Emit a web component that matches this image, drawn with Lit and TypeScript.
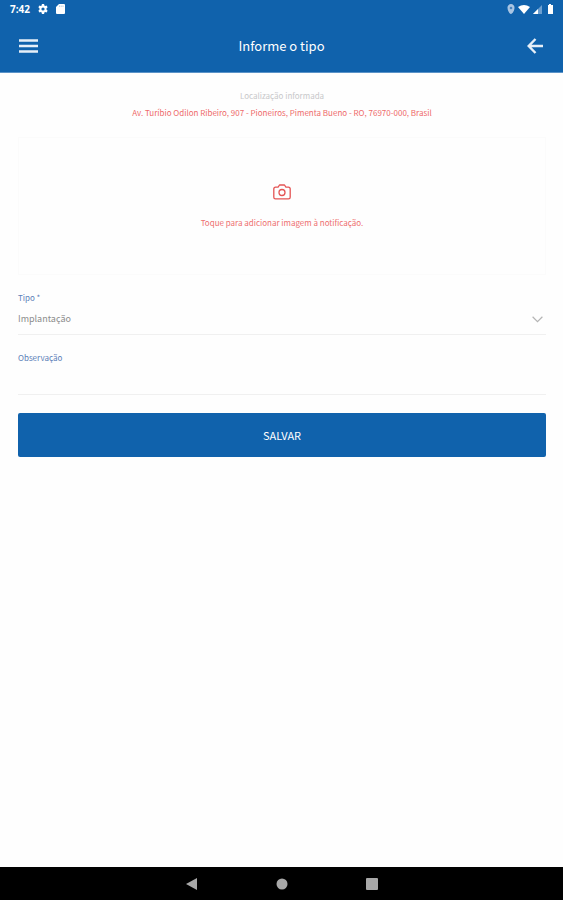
import { LitElement, html, css } from "lit";
import { customElement, state } from "lit/decorators.js";

@customElement("app-root")
export class AppRoot extends LitElement {
  @state() private note = "";

  static styles = css`
    :host {
      display: flex;
      flex-direction: column;
      min-height: 100vh;
      background: #fefefe;
      font-family: "Noto Sans CJK JP", Roboto, sans-serif;
      font-size: 8px;
      line-height: 12px;
      color: #8a8a8a;
    }
    * { box-sizing: border-box; }
    button, input, select {
      font: inherit;
      color: inherit;
      margin: 0;
      padding: 0;
      border: 0;
      border-radius: 0;
      background: none;
      outline: none;
    }
    button { cursor: pointer; }
    svg { display: block; }
    .top { background: #1062ac; color: #fff; border-bottom: 1px solid #5b93c8; }
    .status {
      display: flex;
      align-items: center;
      justify-content: space-between;
      height: 18px;
      padding: 0 9px 0 10px;
    }
    .group { display: flex; align-items: center; gap: 7px; }
    .signals { gap: 3px; }
    .time { font-family: "Open Sans", sans-serif; font-size: 10px; font-weight: 700; }
    .bar {
      display: grid;
      grid-template-columns: 24px 1fr 24px;
      align-items: center;
      height: 54px;
      padding: 2px 16px 0;
    }
    .bar button { display: grid; place-items: center; height: 24px; }
    h1 { margin: 0; text-align: center; font-size: 13px; line-height: 20px; font-weight: 400; }
    main { flex: 1; padding: 17px 17px 24px 18px; }
    .place { margin: 0; text-align: center; line-height: 12px; color: #c8c8ca; }
    .address { margin: 4px 0 0; text-align: center; line-height: 14px; color: #ee6a6a; }
    .photo {
      display: flex;
      flex-direction: column;
      align-items: center;
      justify-content: center;
      gap: 17px;
      width: 100%;
      height: 138px;
      margin: 17px 0;
      border: 1px solid #fbfbfb;
      color: #ee7070;
    }
    label { display: block; color: #5c80b8; }
    .field { border-bottom: 1px solid #f0f0f0; }
    .select { display: grid; align-items: center; margin-bottom: 17px; }
    .select select, .select svg { grid-area: 1 / 1; }
    .select svg { justify-self: end; margin-right: 3px; pointer-events: none; }
    select { appearance: none; width: 100%; height: 30px; font-size: 9px; color: #8c8c8c; }
    input { display: block; width: 100%; height: 30px; font-size: 9px; }
    .save {
      display: block;
      width: 100%;
      height: 44px;
      margin-top: 18px;
      border-radius: 2px;
      background: #1062ac;
      color: #fff;
      font-size: 11px;
    }
    .nav {
      display: flex;
      align-items: center;
      justify-content: center;
      gap: 78px;
      height: 33px;
      background: #000;
    }
    .nav button { display: block; width: 12px; height: 12px; }
  `;

  render() {
    return html`
      <header class="top">
        <div class="status">
          <div class="group">
            <span class="time">7:42</span>
            <svg width="12" height="12" viewBox="0 0 24 24" fill="#fff"><path fill-rule="evenodd" d="M9.800 2h4.400l.5 2.800 1.700 1 2.700-1 2.200 3.800-2.200 1.800v3.200l2.200 1.800-2.200 3.800-2.700-1-1.700 1-.5 2.800H9.800l-.5-2.800-1.700-1-2.700 1-2.200-3.800 2.200-1.800v-3.200L2.700 8.600l2.200-3.800 2.700 1 1.700-1zM12 8.800a3.200 3.200 0 1 0 0 6.400 3.200 3.200 0 0 0 0-6.400z"/></svg>
            <svg width="9" height="10" viewBox="0 0 9 10"><path d="M3 0h5a1 1 0 0 1 1 1v8a1 1 0 0 1-1 1H1a1 1 0 0 1-1-1V3z" fill="#fff"/><path d="M3.500 1.500v1.500M5.200 1.500v1.500M7 1.500v1.500" stroke="#8eb5da" stroke-width=".6"/></svg>
          </div>
          <div class="group signals">
            <svg width="8" height="10" viewBox="0 0 8 10"><path d="M4 0a3.500 3.500 0 0 1 3.500 3.800C7.500 6.500 5.500 10 4 10S.5 6.500.5 3.800A3.500 3.500 0 0 1 4 0z" fill="#a9c5e3"/><circle cx="4" cy="4" r="1.300" fill="#4984bf"/></svg>
            <svg width="12" height="9" viewBox="0 0 12 9"><path d="M0 2Q6-2 12 2L6 9z" fill="#fff"/></svg>
            <svg width="9" height="9" viewBox="0 0 9 9"><path d="M9 0v9H0z" fill="#6c9fd0"/><path d="M5 4v5H0z" fill="#fff"/></svg>
            <svg width="9" height="10" viewBox="0 0 9 10"><path d="M3 1h1V0h2v1h2v9H3V1z" fill="#fff"/></svg>
          </div>
        </div>
        <div class="bar">
          <button aria-label="Menu">
            <svg width="20" height="16" viewBox="0 0 20 16"><path d="M1 2.500h19M1 8h19M1 13.500h19" stroke="#e6eff8" stroke-width="2.600"/></svg>
          </button>
          <h1>Informe o tipo</h1>
          <button aria-label="Voltar">
            <svg width="16" height="16" viewBox="0 0 16 16" fill="none" stroke="#e6eff8" stroke-width="2.400"><path d="M8.500 1 1.700 8l6.800 7M2 8h14"/></svg>
          </button>
        </div>
      </header>
      <main>
        <p class="place">Localização informada</p>
        <p class="address">Av. Turíbio Odilon Ribeiro, 907 - Pioneiros, Pimenta Bueno - RO, 76970-000, Brasil</p>
        <button class="photo">
          <svg width="18" height="16" viewBox="0 0 18 16" fill="none" stroke="#e45454" stroke-width="1.300" stroke-linejoin="round"><path d="M2.500 3.200h2.600L6.500 1h5l1.400 2.200h2.600A1.700 1.700 0 0 1 17.200 5v8.200a1.700 1.700 0 0 1-1.700 1.700h-13A1.700 1.700 0 0 1 .8 13.200V5a1.700 1.700 0 0 1 1.700-1.800z"/><circle cx="9" cy="8.500" r="3"/></svg>
          <span>Toque para adicionar imagem à notificação.</span>
        </button>
        <label for="tipo">Tipo *</label>
        <div class="field select">
          <select id="tipo"><option>Implantação</option></select>
          <svg width="11" height="7" viewBox="0 0 11 7" fill="none" stroke="#b4b4b4" stroke-width="1.200"><path d="m.6.800 4.900 4.800L10.400.8"/></svg>
        </div>
        <label for="obs">Observação</label>
        <div class="field">
          <input id="obs" type="text" .value=${this.note}
            @input=${(e: Event) => (this.note = (e.target as HTMLInputElement).value)} />
        </div>
        <button class="save">SALVAR</button>
      </main>
      <nav class="nav" aria-label="Sistema">
        <button aria-label="Anterior"><svg width="12" height="12" viewBox="0 0 12 12"><path d="M11 0v12L0 6z" fill="#a8a8a8"/></svg></button>
        <button aria-label="Início"><svg width="12" height="12" viewBox="0 0 12 12"><circle cx="6" cy="6" r="5.500" fill="#a8a8a8"/></svg></button>
        <button aria-label="Recentes"><svg width="12" height="12" viewBox="0 0 12 12"><rect width="12" height="12" rx="1" fill="#a8a8a8"/></svg></button>
      </nav>
    `;
  }
}
